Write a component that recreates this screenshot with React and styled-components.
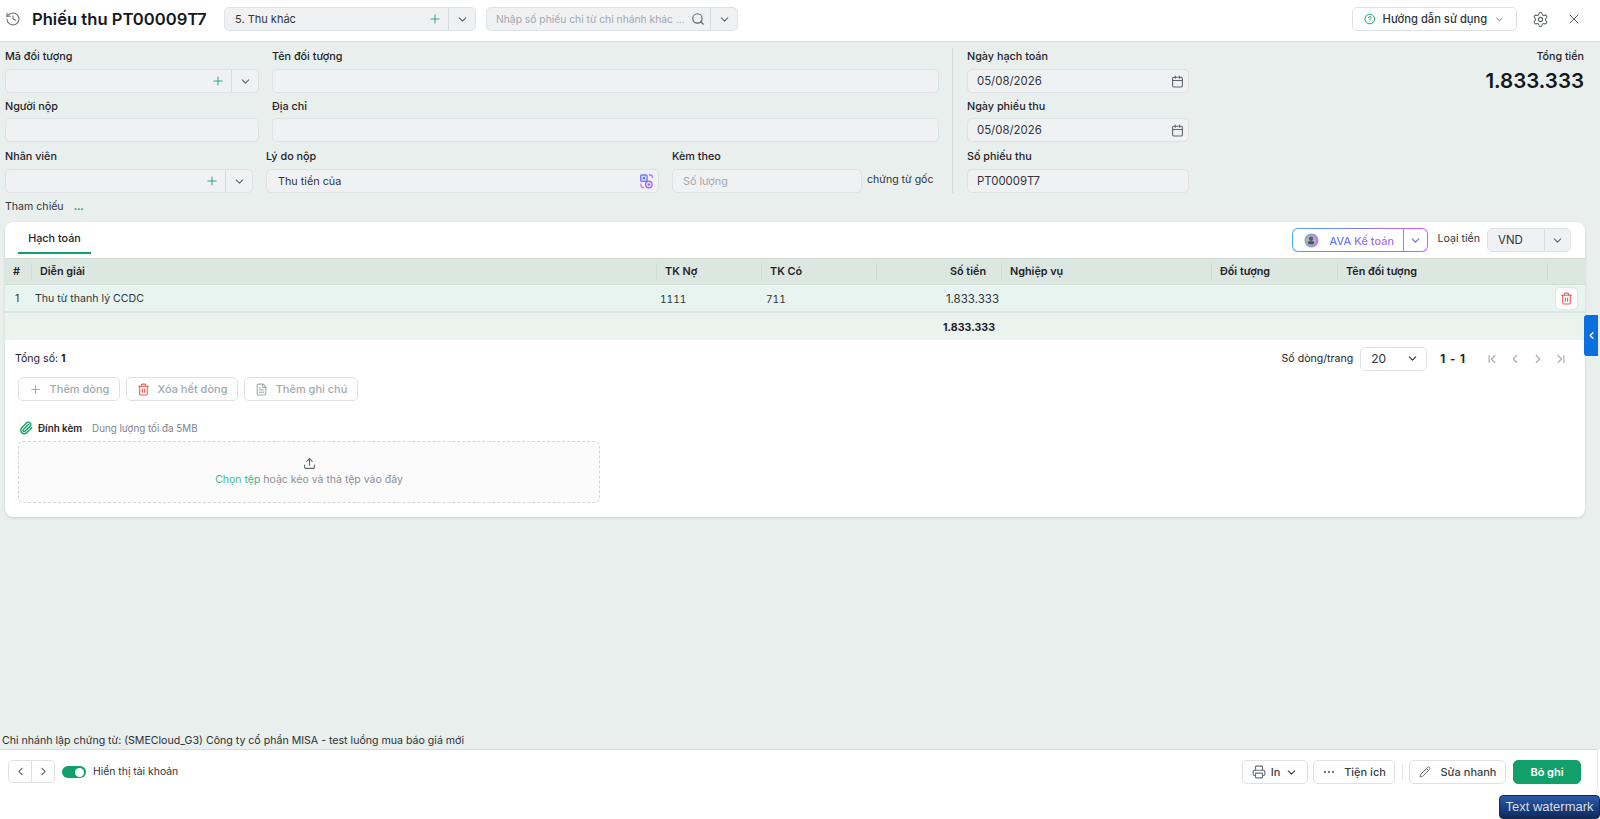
import React from "react";
import styled, { createGlobalStyle } from "styled-components";
import {
  History, Plus, ChevronDown, ChevronLeft, ChevronRight, ChevronFirst, ChevronLast,
  Search, CircleHelp, Settings, X, Calendar, Trash2, Printer, Ellipsis, Pencil,
  Upload, Paperclip, FileText,
} from "lucide-react";

const GREEN = "#12a06a";
const TEXT = "#1f2329";

const Global = createGlobalStyle`
  html, body { margin: 0; padding: 0; height: 100%; }
  body { font-family: Inter, "Noto Sans", sans-serif; font-size: 10.8px; color: ${TEXT}; background: #e9efec; }
  * { box-sizing: border-box; }
`;

const Page = styled.div`
  position: relative;
  width: 1600px;
  height: 819px;
  overflow: hidden;
  display: flex;
  flex-direction: column;
`;

/* top bar */
const TopBar = styled.header`
  height: 42px;
  flex: none;
  background: #fff;
  border-bottom: 1px solid #dcdfe1;
  display: flex;
  align-items: center;
  padding: 0 18px 3px 5px;
`;
const Title = styled.h1`
  margin: 0 0 0 11px;
  font-size: 16.6px;
  font-weight: 600;
  line-height: 24px;
  color: #14181d;
  width: 192px;
  white-space: nowrap;
`;
const Combo = styled.div`
  height: 24px;
  width: ${(p) => p.$w}px;
  margin-right: ${(p) => p.$mr || 0}px;
  flex: none;
  display: flex;
  align-items: center;
  background: ${(p) => p.$bg || "#f0f1f3"};
  border: 1px solid #dfe2e4;
  border-radius: 5px;
`;
const ComboText = styled.span`
  flex: 1;
  min-width: 0;
  padding-left: ${(p) => p.$pl || 10}px;
  font-size: ${(p) => p.$size || 10.8}px;
  color: ${(p) => (p.$muted ? "#a3a8ae" : "#30353b")};
  white-space: nowrap;
  overflow: hidden;
`;
const ComboIcon = styled.span`
  width: ${(p) => p.$w || 24}px;
  height: 100%;
  flex: none;
  display: flex;
  align-items: center;
  justify-content: center;
  color: ${(p) => p.$color || "#5e646b"};
`;
const ComboArrow = styled(ComboIcon)`
  border-left: 1px solid #d8dbde;
`;
const TopRight = styled.div`
  margin-left: auto;
  display: flex;
  align-items: center;
`;
const GuideButton = styled.button`
  width: 165px;
  height: 24px;
  background: #fff;
  border: 1px solid #dfe2e4;
  border-radius: 5px;
  display: flex;
  align-items: center;
  gap: 7px;
  padding: 0 11px 0 11px;
  font: 500 11.2px Inter, sans-serif;
  color: #30353b;
  white-space: nowrap;
`;
const BarIcon = styled.span`
  display: flex;
  margin-left: ${(p) => p.$ml}px;
  color: #5e646b;
`;

/* form */
const FormArea = styled.section`
  flex: none;
  display: flex;
  padding: 6px 16px 0 5px;
  height: 180px;
`;
const LeftForm = styled.div`
  width: 934px;
  flex: none;
  display: flex;
  flex-direction: column;
`;
const FormRow = styled.div`
  display: flex;
  gap: ${(p) => p.$gap || 13}px;
  margin-bottom: ${(p) => p.$mb || 5}px;
`;
const Field = styled.div`
  width: ${(p) => (p.$w ? `${p.$w}px` : "auto")};
  flex: ${(p) => (p.$w ? "none" : "1")};
  display: flex;
  flex-direction: column;
`;
const Label = styled.label`
  height: 18px;
  line-height: 18px;
  font-size: 10.8px;
  font-weight: 500;
  color: ${TEXT};
  margin-top: ${(p) => p.$mt || 0}px;
  margin-bottom: ${(p) => p.$mb ?? 3}px;
  white-space: nowrap;
`;
const Input = styled.div`
  height: 24px;
  display: flex;
  align-items: center;
  background: #f0f1f3;
  border: 1px solid #dfe2e4;
  border-radius: 5px;
`;
const Divider = styled.div`
  width: 1px;
  height: 145px;
  background: #d3d8d8;
  margin: 0 14px 0 13px;
  flex: none;
`;
const Unit = styled.span`
  align-self: flex-end;
  height: 24px;
  line-height: 22px;
  font-size: 10.6px;
  color: #30353b;
  margin-left: -8px;
  white-space: nowrap;
`;
const Total = styled.div`
  margin-left: auto;
  text-align: right;
`;
const TotalLabel = styled.div`
  height: 18px;
  line-height: 18px;
  font-size: 10.7px;
  font-weight: 500;
`;
const TotalValue = styled.div`
  margin-top: 3px;
  font-size: 20.5px;
  line-height: 24px;
  font-weight: 600;
  color: #14181d;
`;
const Ref = styled.div`
  position: absolute;
  left: 5px;
  top: 198px;
  height: 18px;
  line-height: 18px;
  font-size: 10.6px;
  display: flex;
  gap: 10px;
  color: #30353b;
`;
const RefMore = styled.span`
  color: ${GREEN};
  font-weight: 800;
  font-size: 9.5px;
`;

/* card */
const Card = styled.main`
  flex: none;
  margin: 0 15px 0 5px;
  height: 295px;
  background: #fff;
  border-radius: 8px;
  box-shadow: 0 1px 3px rgba(30, 50, 40, 0.14);
  overflow: hidden;
`;
const CardHead = styled.div`
  height: 36px;
  display: flex;
  align-items: flex-start;
  padding: 6px 14px 0 13px;
`;
const Tab = styled.div`
  width: 73px;
  height: 27px;
  text-align: center;
  line-height: 23px;
  font-size: 10.8px;
  font-weight: 500;
  color: ${TEXT};
  border-bottom: 2px solid ${GREEN};
  margin-top: -1px;
`;
const AvaGroup = styled.div`
  margin-left: auto;
  width: 136px;
  height: 24px;
  display: flex;
  border: 1px solid transparent;
  border-radius: 6px;
  background: linear-gradient(#fff, #fff) padding-box,
    linear-gradient(90deg, #4aa3f5, #7a7cf5 50%, #d45cf0) border-box;
`;
const AvaMain = styled.div`
  width: 111px;
  flex: none;
  display: flex;
  align-items: center;
  padding-left: 11px;
  gap: 11px;
  border-right: 1px solid #c66af0;
`;
const AvaText = styled.span`
  font-size: 11px;
  font-weight: 500;
  padding-top: 1px;
  white-space: nowrap;
  background: linear-gradient(90deg, #5a78f5, #b264f2);
  -webkit-background-clip: text;
  background-clip: text;
  color: transparent;
`;
const AvaArrow = styled.span`
  flex: 1;
  display: flex;
  align-items: center;
  justify-content: center;
  color: #5a6cf0;
`;
const CurrencyLabel = styled.span`
  margin: 0 7px 0 10px;
  line-height: 22px;
  font-size: 10.6px;
  color: #30353b;
`;

const Columns = "27px 625px 105px 115px 125px 210px 126px 210px 36px";
const HeadRow = styled.div`
  display: grid;
  grid-template-columns: ${Columns};
  height: 27px;
  background: #dbe7e0;
  border-top: 1px solid #d0dcd6;
  border-bottom: 1px solid #d0dcd6;
  align-items: center;
`;
const HeadCell = styled.div`
  height: 17px;
  line-height: 17px;
  padding: ${(p) => (p.$align === "right" ? "0 15px 0 8px" : "0 8px")};
  font-size: 10.8px;
  font-weight: 600;
  color: ${TEXT};
  text-align: ${(p) => p.$align || "left"};
  border-right: ${(p) => (p.$last ? "none" : "1px solid #cfdcd5")};
  white-space: nowrap;
`;
const BodyRow = styled.div`
  display: grid;
  grid-template-columns: ${Columns};
  height: 28px;
  padding-top: 1px;
  background: #e8f4ef;
  border-bottom: 2px solid #dde6e2;
  align-items: center;
`;
const Cell = styled.div`
  padding: ${(p) => p.$pad || "0 4px"};
  font-size: 10.6px;
  color: #30353b;
  text-align: ${(p) => p.$align || "left"};
  white-space: nowrap;
`;
const AccountCell = styled(Cell)`
  font-size: 10.2px;
  font-variant-numeric: tabular-nums;
`;
const AmountCell = styled(Cell)`
  font-size: 11.5px;
`;
const SumRow = styled(BodyRow)`
  height: 27px;
  background: #ebf3ef;
  border-bottom: 0;
`;
const SumCell = styled(Cell)`
  font-weight: 700;
  font-size: 10.6px;
  color: ${TEXT};
`;
const DeleteBtn = styled.button`
  width: 23px;
  height: 23px;
  margin-left: 7px;
  padding: 0;
  background: #fff;
  border: 1px solid #e3e6e8;
  border-radius: 5px;
  display: flex;
  align-items: center;
  justify-content: center;
  color: #ee5a52;
`;
const PagerRow = styled.div`
  height: 36px;
  display: flex;
  align-items: center;
  padding: 1px 17px 0 10px;
  font-size: 10.6px;
`;
const Strong = styled.b`
  font-weight: 700;
`;
const PagerRight = styled.div`
  margin-left: auto;
  display: flex;
  align-items: center;
`;
const PageSize = styled.div`
  width: 67px;
  height: 24px;
  margin-left: 7px;
  border: 1px solid #dfe2e4;
  border-radius: 5px;
  display: flex;
  align-items: center;
  justify-content: space-between;
  padding: 0 7px 0 10px;
  font-size: 12px;
  color: #30353b;
`;
const PageRange = styled.b`
  margin: 0 19px 0 13px;
  font-weight: 700;
  font-size: 11.5px;
  letter-spacing: 1px;
`;
const PageIcons = styled.div`
  display: flex;
  gap: 9px;
  color: #a9aeb3;
`;
const ActionRow = styled.div`
  display: flex;
  gap: 6px;
  padding-left: 13px;
  margin-top: 1px;
`;
const GhostBtn = styled.button`
  width: ${(p) => p.$w}px;
  height: 24px;
  background: #fff;
  border: 1px solid #dfe2e4;
  border-radius: 5px;
  display: flex;
  align-items: center;
  justify-content: center;
  gap: 8px;
  padding: 0;
  font: 500 11px Inter, sans-serif;
  color: #a3a8ae;
  white-space: nowrap;
  svg { color: ${(p) => p.$icon || "#a3a8ae"}; }
`;
const AttachHead = styled.div`
  margin: 18px 0 0 14px;
  height: 18px;
  display: flex;
  align-items: center;
  font-size: 9.8px;
  color: ${GREEN};
`;
const AttachTitle = styled.b`
  margin: 0 10px 0 5px;
  font-weight: 600;
  color: ${TEXT};
`;
const AttachNote = styled.span`
  color: #7d8389;
`;
const DropZone = styled.div`
  width: 582px;
  height: 62px;
  margin: 4px 0 0 13px;
  border: 1px dashed #d5d8db;
  border-radius: 5px;
  background: #fbfbfb;
  display: flex;
  flex-direction: column;
  align-items: center;
  justify-content: center;
  gap: 3px;
  padding-bottom: 2px;
  font-size: 10.5px;
  color: #8a9096;
  svg { color: #5e646b; }
`;
const ChooseFile = styled.span`
  color: #3fb58c;
`;

/* bottom */
const Branch = styled.div`
  margin-top: auto;
  height: 21px;
  padding: 4px 0 0 2px;
  line-height: 17px;
  font-size: 10.6px;
  color: #2c3036;
  white-space: nowrap;
`;
const BottomArea = styled.div`
  flex: none;
  height: 70px;
  background: #fff;
`;
const Footer = styled.footer`
  height: 44px;
  margin-right: 2px;
  border-top: 1px solid #d8dcde;
  border-right: 1px solid #e3e6e8;
  border-bottom: 1px solid #fff;
  border-bottom-right-radius: 7px;
  display: flex;
  align-items: flex-start;
  padding: 10px 16px 0 8px;
`;
const NavGroup = styled.div`
  width: 47px;
  height: 23px;
  border: 1px solid #dfe2e4;
  border-radius: 5px;
  display: flex;
  color: #6c7278;
`;
const NavBtn = styled.span`
  flex: 1;
  display: flex;
  align-items: center;
  justify-content: center;
  & + & { border-left: 1px solid #dfe2e4; }
`;
const Toggle = styled.span`
  width: 24px;
  height: 12px;
  margin: 6px 7px 0 7px;
  border-radius: 6px;
  background: ${GREEN};
  display: flex;
  align-items: center;
  justify-content: flex-end;
  padding-right: 2px;
`;
const Knob = styled.span`
  width: 9px;
  height: 9px;
  border-radius: 50%;
  background: #fff;
`;
const ToggleText = styled.span`
  line-height: 23px;
  font-size: 10.4px;
  color: #30353b;
`;
const FooterRight = styled.div`
  margin-left: auto;
  display: flex;
  align-items: center;
  gap: 5px;
`;
const FootBtn = styled.button`
  width: ${(p) => p.$w}px;
  height: 24px;
  margin-left: ${(p) => (p.$primary ? 2 : 0)}px;
  background: ${(p) => (p.$primary ? GREEN : "#fff")};
  border: 1px solid ${(p) => (p.$primary ? GREEN : "#dfe2e4")};
  border-radius: 5px;
  display: flex;
  align-items: center;
  justify-content: center;
  gap: ${(p) => p.$gap || 5}px;
  padding: 0;
  font: ${(p) => (p.$primary ? 600 : 500)} 11px Inter, sans-serif;
  color: ${(p) => (p.$primary ? "#fff" : "#3a3f45")};
  white-space: nowrap;
`;
const FootDivider = styled.span`
  width: 1px;
  height: 16px;
  background: #e3e6e8;
  margin: 0 1.5px;
`;
const SideHandle = styled.div`
  position: absolute;
  right: 2px;
  top: 315px;
  width: 14px;
  height: 41px;
  background: #0b6fe0;
  border-radius: 3px 0 0 3px;
  display: flex;
  align-items: center;
  justify-content: center;
  color: #fff;
`;
const Watermark = styled.div`
  position: absolute;
  right: 0;
  bottom: 0;
  width: 101px;
  height: 24px;
  border: 1px solid #1a2a44;
  border-radius: 4px;
  background: linear-gradient(#2a5aa8, #0c2a5e);
  color: #d8dee8;
  font: 13px/21px "Liberation Sans", Arial, sans-serif;
  text-align: center;
  white-space: nowrap;
`;

const AiIcon = () => (
  <svg width="13" height="15" viewBox="0 0 13 15" fill="none">
    <rect x="0.7" y="1" width="6.4" height="6.4" rx="1" fill="#d6d3fb" stroke="#6f7df5" strokeWidth="1.3" />
    <rect x="3" y="3.2" width="2" height="2" fill="#5a6cf0" />
    <path d="M9 1h2a1.3 1.3 0 0 1 1.3 1.3V4" stroke="#c36cf0" strokeWidth="1.3" />
    <path d="M1 9.5V12a1.5 1.5 0 0 0 1.5 1.5H4" stroke="#e06ce0" strokeWidth="1.3" />
    <circle cx="8.8" cy="10.5" r="3.3" fill="#e3d2fb" stroke="#9a68f0" strokeWidth="1.2" />
    <circle cx="8.8" cy="10.5" r="1.1" fill="#6f5ef0" />
  </svg>
);

const AvaLogo = () => (
  <svg width="15" height="15" viewBox="0 0 15 15">
    <defs>
      <linearGradient id="avaRing" x1="0" y1="0" x2="1" y2="0">
        <stop offset="0" stopColor="#6fb0c8" />
        <stop offset="1" stopColor="#c47cf0" />
      </linearGradient>
    </defs>
    <circle cx="7.5" cy="7.5" r="7" fill="url(#avaRing)" />
    <circle cx="7" cy="7.5" r="5" fill="#aeb6be" />
    <circle cx="7" cy="5.8" r="2.2" fill="#566069" />
    <rect x="3.8" y="8.2" width="6.4" height="3" rx="1.4" fill="#4a5159" />
  </svg>
);

const Cols = [
  ["#"], ["Diễn giải"], ["TK Nợ"], ["TK Có"], ["Số tiền", "right"],
  ["Nghiệp vụ"], ["Đối tượng"], ["Tên đối tượng"], [""],
];

const ComboField = () => (
  <>
    <ComboText />
    <ComboIcon $w={27} $color={GREEN}><Plus size={14} strokeWidth={1.5} /></ComboIcon>
    <ComboArrow $w={27}><ChevronDown size={13} /></ComboArrow>
  </>
);

const DateInput = ({ value }) => (
  <Input>
    <ComboText $size={11.4} $pl={9}>{value}</ComboText>
    <ComboIcon $w={22}><Calendar size={13} /></ComboIcon>
  </Input>
);

export default function App() {
  return (
    <Page>
      <Global />
      <TopBar>
        <History size={16} color="#6b7177" strokeWidth={1.6} />
        <Title>Phiếu thu PT00009T7</Title>
        <Combo $w={252} $mr={10}>
          <ComboText $size={11}>5. Thu khác</ComboText>
          <ComboIcon $w={27} $color={GREEN}><Plus size={14} strokeWidth={1.5} /></ComboIcon>
          <ComboArrow $w={27}><ChevronDown size={13} /></ComboArrow>
        </Combo>
        <Combo $w={252}>
          <ComboText $muted $size={10.3} $pl={9}>Nhập số phiếu chi từ chi nhánh khác ...</ComboText>
          <ComboIcon><Search size={14} /></ComboIcon>
          <ComboArrow $w={27}><ChevronDown size={13} /></ComboArrow>
        </Combo>
        <TopRight>
          <GuideButton>
            <CircleHelp size={14} color={GREEN} />
            <span>Hướng dẫn sử dụng</span>
            <ChevronDown size={13} color="#6b7177" style={{ marginLeft: "auto" }} />
          </GuideButton>
          <BarIcon $ml={15}><Settings size={17} strokeWidth={1.5} /></BarIcon>
          <BarIcon $ml={17}><X size={16} strokeWidth={1.5} /></BarIcon>
        </TopRight>
      </TopBar>

      <FormArea>
        <LeftForm>
          <FormRow>
            <Field $w={254}>
              <Label>Mã đối tượng</Label>
              <Input><ComboField /></Input>
            </Field>
            <Field>
              <Label>Tên đối tượng</Label>
              <Input />
            </Field>
          </FormRow>
          <FormRow $mb={6}>
            <Field $w={254}>
              <Label $mb={2}>Người nộp</Label>
              <Input />
            </Field>
            <Field>
              <Label $mb={2}>Địa chỉ</Label>
              <Input />
            </Field>
          </FormRow>
          <FormRow>
            <Field $w={248}>
              <Label>Nhân viên</Label>
              <Input><ComboField /></Input>
            </Field>
            <Field $w={393}>
              <Label>Lý do nộp</Label>
              <Input>
                <ComboText $pl={11}>Thu tiền của</ComboText>
                <ComboIcon><AiIcon /></ComboIcon>
              </Input>
            </Field>
            <Field $w={190}>
              <Label>Kèm theo</Label>
              <Input><ComboText $muted>Số lượng</ComboText></Input>
            </Field>
            <Unit>chứng từ gốc</Unit>
          </FormRow>
        </LeftForm>
        <Divider />
        <Field $w={222}>
          <Label>Ngày hạch toán</Label>
          <DateInput value="05/08/2026" />
          <Label $mt={5} $mb={2}>Ngày phiếu thu</Label>
          <DateInput value="05/08/2026" />
          <Label $mt={6}>Số phiếu thu</Label>
          <Input><ComboText $size={11.4} $pl={9}>PT00009T7</ComboText></Input>
        </Field>
        <Total>
          <TotalLabel>Tổng tiền</TotalLabel>
          <TotalValue>1.833.333</TotalValue>
        </Total>
      </FormArea>
      <Ref>Tham chiếu <RefMore>...</RefMore></Ref>

      <Card>
        <CardHead>
          <Tab>Hạch toán</Tab>
          <AvaGroup>
            <AvaMain>
              <AvaLogo />
              <AvaText>AVA Kế toán</AvaText>
            </AvaMain>
            <AvaArrow><ChevronDown size={13} /></AvaArrow>
          </AvaGroup>
          <CurrencyLabel>Loại tiền</CurrencyLabel>
          <Combo $w={84}>
            <ComboText $size={11.5}>VND</ComboText>
            <ComboArrow $w={26}><ChevronDown size={13} /></ComboArrow>
          </Combo>
        </CardHead>
        <HeadRow>
          {Cols.map(([name, align], i) => (
            <HeadCell key={i} $align={align} $last={i === Cols.length - 1}>{name}</HeadCell>
          ))}
        </HeadRow>
        <BodyRow>
          <Cell $pad="0 0 0 10px">1</Cell>
          <Cell $pad="0 3px">Thu từ thanh lý CCDC</Cell>
          <AccountCell $pad="0 3px">1111</AccountCell>
          <AccountCell>711</AccountCell>
          <AmountCell $align="right" $pad="0 3px">1.833.333</AmountCell>
          <Cell /><Cell /><Cell />
          <Cell $pad="0"><DeleteBtn><Trash2 size={13} /></DeleteBtn></Cell>
        </BodyRow>
        <SumRow>
          <Cell /><Cell /><Cell /><Cell />
          <SumCell $align="right" $pad="0 7px">1.833.333</SumCell>
          <Cell /><Cell /><Cell /><Cell />
        </SumRow>
        <PagerRow>
          <span>Tổng số: <Strong>1</Strong></span>
          <PagerRight>
            <span>Số dòng/trang</span>
            <PageSize>20 <ChevronDown size={13} /></PageSize>
            <PageRange>1 - 1</PageRange>
            <PageIcons>
              <ChevronFirst size={14} />
              <ChevronLeft size={14} />
              <ChevronRight size={14} />
              <ChevronLast size={14} />
            </PageIcons>
          </PagerRight>
        </PagerRow>
        <ActionRow>
          <GhostBtn $w={102}><Plus size={13} />Thêm dòng</GhostBtn>
          <GhostBtn $w={112} $icon="#ee5a52"><Trash2 size={13} />Xóa hết dòng</GhostBtn>
          <GhostBtn $w={114}><FileText size={13} />Thêm ghi chú</GhostBtn>
        </ActionRow>
        <AttachHead>
          <Paperclip size={14} strokeWidth={2.4} />
          <AttachTitle>Đính kèm</AttachTitle>
          <AttachNote>Dung lượng tối đa 5MB</AttachNote>
        </AttachHead>
        <DropZone>
          <Upload size={13} />
          <span><ChooseFile>Chọn tệp</ChooseFile> hoặc kéo và thả tệp vào đây</span>
        </DropZone>
      </Card>

      <Branch>Chi nhánh lập chứng từ: (SMECloud_G3) Công ty cổ phần MISA - test luồng mua báo giá mới</Branch>
      <BottomArea>
        <Footer>
          <NavGroup>
            <NavBtn><ChevronLeft size={13} /></NavBtn>
            <NavBtn><ChevronRight size={13} /></NavBtn>
          </NavGroup>
          <Toggle><Knob /></Toggle>
          <ToggleText>Hiển thị tài khoản</ToggleText>
          <FooterRight>
            <FootBtn $w={66}><Printer size={14} color="#6b7177" />In <ChevronDown size={13} /></FootBtn>
            <FootBtn $w={82} $gap={8}><Ellipsis size={14} color="#6b7177" />Tiện ích</FootBtn>
            <FootDivider />
            <FootBtn $w={97} $gap={10}><Pencil size={12} color="#6b7177" />Sửa nhanh</FootBtn>
            <FootBtn $w={68} $primary>Bỏ ghi</FootBtn>
          </FooterRight>
        </Footer>
      </BottomArea>

      <SideHandle><ChevronLeft size={11} strokeWidth={3} /></SideHandle>
      <Watermark>Text watermark</Watermark>
    </Page>
  );
}
